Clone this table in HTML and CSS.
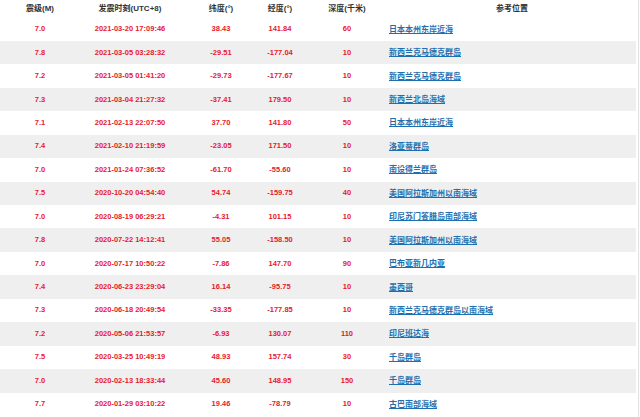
FILE: index.html
```html
<!DOCTYPE html>
<html lang="zh-CN">
<head>
<meta charset="utf-8">
<title>地震列表</title>
<link rel="stylesheet" href="styles.css">
</head>
<body>
<div class="wrap">
<table class="quakes">
<colgroup>
<col class="c-mag"><col class="c-time"><col class="c-lat"><col class="c-lon"><col class="c-depth"><col class="c-loc">
</colgroup>
<thead>
<tr><th>震级(M)</th><th>发震时刻(UTC+8)</th><th>纬度(°)</th><th>经度(°)</th><th class="depth">深度(千米)</th><th class="loc-h">参考位置</th></tr>
</thead>
<tbody>
<tr><td>7.0</td><td>2021-03-20 17:09:46</td><td>38.43</td><td>141.84</td><td class="depth">60</td><td class="loc"><a href="#">日本本州东岸近海</a></td></tr>
<tr><td>7.8</td><td>2021-03-05 03:28:32</td><td>-29.51</td><td>-177.04</td><td class="depth">10</td><td class="loc"><a href="#">新西兰克马德克群岛</a></td></tr>
<tr><td>7.2</td><td>2021-03-05 01:41:20</td><td>-29.73</td><td>-177.67</td><td class="depth">10</td><td class="loc"><a href="#">新西兰克马德克群岛</a></td></tr>
<tr><td>7.3</td><td>2021-03-04 21:27:32</td><td>-37.41</td><td>179.50</td><td class="depth">10</td><td class="loc"><a href="#">新西兰北岛海域</a></td></tr>
<tr><td>7.1</td><td>2021-02-13 22:07:50</td><td>37.70</td><td>141.80</td><td class="depth">50</td><td class="loc"><a href="#">日本本州东岸近海</a></td></tr>
<tr><td>7.4</td><td>2021-02-10 21:19:59</td><td>-23.05</td><td>171.50</td><td class="depth">10</td><td class="loc"><a href="#">洛亚蒂群岛</a></td></tr>
<tr><td>7.0</td><td>2021-01-24 07:36:52</td><td>-61.70</td><td>-55.60</td><td class="depth">10</td><td class="loc"><a href="#">南设得兰群岛</a></td></tr>
<tr><td>7.5</td><td>2020-10-20 04:54:40</td><td>54.74</td><td>-159.75</td><td class="depth">40</td><td class="loc"><a href="#">美国阿拉斯加州以南海域</a></td></tr>
<tr><td>7.0</td><td>2020-08-19 06:29:21</td><td>-4.31</td><td>101.15</td><td class="depth">10</td><td class="loc"><a href="#">印尼苏门答腊岛南部海域</a></td></tr>
<tr><td>7.8</td><td>2020-07-22 14:12:41</td><td>55.05</td><td>-158.50</td><td class="depth">10</td><td class="loc"><a href="#">美国阿拉斯加州以南海域</a></td></tr>
<tr><td>7.0</td><td>2020-07-17 10:50:22</td><td>-7.86</td><td>147.70</td><td class="depth">90</td><td class="loc"><a href="#">巴布亚新几内亚</a></td></tr>
<tr><td>7.4</td><td>2020-06-23 23:29:04</td><td>16.14</td><td>-95.75</td><td class="depth">10</td><td class="loc"><a href="#">墨西哥</a></td></tr>
<tr><td>7.3</td><td>2020-06-18 20:49:54</td><td>-33.35</td><td>-177.85</td><td class="depth">10</td><td class="loc"><a href="#">新西兰克马德克群岛以南海域</a></td></tr>
<tr><td>7.2</td><td>2020-05-06 21:53:57</td><td>-6.93</td><td>130.07</td><td class="depth">110</td><td class="loc"><a href="#">印尼班达海</a></td></tr>
<tr><td>7.5</td><td>2020-03-25 10:49:19</td><td>48.93</td><td>157.74</td><td class="depth">30</td><td class="loc"><a href="#">千岛群岛</a></td></tr>
<tr><td>7.0</td><td>2020-02-13 18:33:44</td><td>45.60</td><td>148.95</td><td class="depth">150</td><td class="loc"><a href="#">千岛群岛</a></td></tr>
<tr><td>7.7</td><td>2020-01-29 03:10:22</td><td>19.46</td><td>-78.79</td><td class="depth">10</td><td class="loc"><a href="#">古巴南部海域</a></td></tr>
</tbody>
</table>
</div>
</body>
</html>
```

FILE: styles.css
```css
html, body {
  margin: 0;
  padding: 0;
  background: #ffffff;
}

.wrap {
  width: 638px;
  height: 417px;
  border-right: 1px solid #e2e2e2;
  overflow: hidden;
}

.quakes {
  width: 636px;
  border-collapse: collapse;
  table-layout: fixed;
  font-family: "Liberation Sans", "Noto Sans CJK SC", Arial, sans-serif;
  font-weight: bold;
}

.c-mag { width: 80px; }
.c-time { width: 100px; }
.c-lat { width: 82px; }
.c-lon { width: 36px; }
.c-depth { width: 88px; }
.c-loc { width: 250px; }

.quakes th {
  height: 17.5px;
  padding: 0;
  font-size: 8px;
  line-height: 10px;
  color: #333333;
  text-align: center;
  white-space: nowrap;
  vertical-align: middle;
}

.quakes td {
  height: 23.45px;
  padding: 0;
  font-size: 7.5px;
  line-height: 10px;
  color: #e8192c;
  text-align: center;
  white-space: nowrap;
  vertical-align: middle;
}

.quakes tbody tr:nth-child(even) td {
  background: #efefef;
}

.quakes .depth {
  padding-left: 10px;
}

.quakes .loc {
  text-align: left;
  padding-left: 3px;
}

.quakes .loc-h {
  padding-left: 2px;
}

.quakes .loc a {
  font-family: "Noto Sans CJK SC", "Liberation Sans", sans-serif;
  font-size: 8px;
  font-weight: bold;
  color: #1f6fae;
  text-decoration: underline;
}
```
